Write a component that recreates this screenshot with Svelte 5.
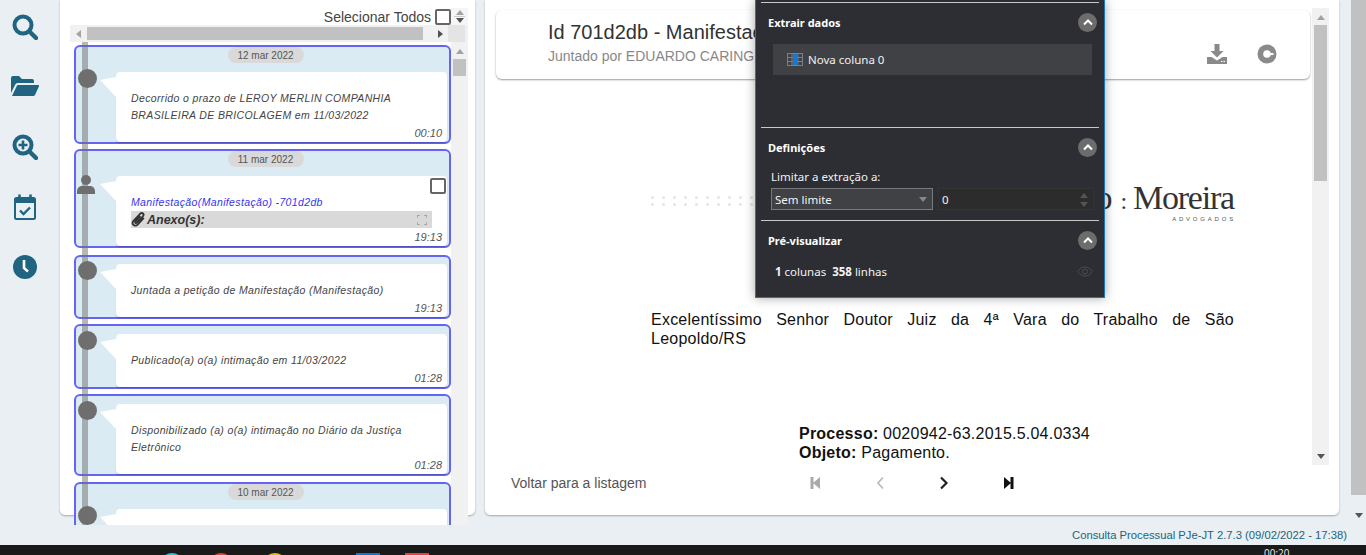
<script>
  const items = [
    { date: "12 mar 2022", text: "Decorrido o prazo de LEROY MERLIN COMPANHIA BRASILEIRA DE BRICOLAGEM em 11/03/2022", time: "00:10", gap: 0 },
    { date: "11 mar 2022", link: "Manifestação(Manifestação) -701d2db", attach: true, time: "19:13", gap: 5 },
    { text: "Juntada a petição de Manifestação (Manifestação)", time: "19:13", gap: 7 },
    { text: "Publicado(a) o(a) intimação em 11/03/2022", time: "01:28", gap: 5 },
    { text: "Disponibilizado (a) o(a) intimação no Diário da Justiça Eletrônico", time: "01:28", gap: 5 },
    { date: "10 mar 2022", text: "Juntada a petição de Razões Finais", time: "18:02", gap: 6 }
  ];
</script>

<div class="page">
  <div class="main">
    <nav class="nav">
      <svg viewBox="0 0 26 26" width="26" height="26"><circle cx="11" cy="11" r="8.5" fill="none" stroke="#1f6480" stroke-width="4" /><path d="M17.5 17.5 24 24" stroke="#1f6480" stroke-width="4.4" stroke-linecap="round" /></svg>
      <svg class="folder" viewBox="0 0 28 20" width="28" height="20"><path d="M0 17V2a2 2 0 0 1 2-2h6l3 3h10a2 2 0 0 1 2 2v2H7a3 3 0 0 0-3 2z" fill="#1f6480" /><path d="M1 20 6 9.500a1 1 0 0 1 1-.5h20a1 1 0 0 1 1 1.300L24 19a2 2 0 0 1-2 1z" fill="#1f6480" /></svg>
      <svg viewBox="0 0 26 26" width="26" height="26"><circle cx="11" cy="11" r="8.500" fill="none" stroke="#1f6480" stroke-width="4" /><path d="M17.500 17.500 24 24" stroke="#1f6480" stroke-width="4.400" stroke-linecap="round" /><path d="M11 6.500v9M6.500 11h9" stroke="#1f6480" stroke-width="2.600" /></svg>
      <svg viewBox="0 0 22 26" width="22" height="26"><rect x="1" y="4" width="20" height="21" rx="1.500" fill="none" stroke="#1f6480" stroke-width="2" /><rect x="1" y="4" width="20" height="5" fill="#1f6480" /><path d="M5.500 0.500v4M16.500 0.500v4" stroke="#1f6480" stroke-width="2.600" /><path d="m6 16.500 3.500 3.500 6.500-6.500" fill="none" stroke="#1f6480" stroke-width="2.400" /></svg>
      <svg viewBox="0 0 24 24" width="24" height="24"><circle cx="12" cy="12" r="12" fill="#1f6480" /><path d="M11 5v8l4 3.500" fill="none" stroke="#fff" stroke-width="2.600" /></svg>
    </nav>

    <section class="left-card">
      <div class="pane">
        <div class="select-all">
          <span>Selecionar Todos</span>
          <span class="check"></span>
          <span class="mini-spin"><i class="up"></i><i class="sep"></i><i class="down"></i></span>
        </div>
        <div class="hbar">
          <i class="arrow-left"></i>
          <div class="hthumb"></div>
          <i class="arrow-right"></i>
          <div class="corner"></div>
        </div>
        <div class="pane-body">
          <div class="list">
            {#each items as item}
              <article class="item" style="margin-top: {item.gap}px">
                {#if item.date}
                  <div class="pill">{item.date}</div>
                {/if}
                <div class="bubble" class:first={!item.date}>
                  {#if item.attach}
                    <svg class="person" viewBox="0 0 18 19" width="18" height="19"><circle cx="9" cy="5" r="5" fill="#6e6e6e" /><path d="M0 19v-3a5 5 0 0 1 5-5h8a5 5 0 0 1 5 5v3z" fill="#6e6e6e" /></svg>
                    <span class="check small"></span>
                  {:else}
                    <span class="dot"></span>
                  {/if}
                  {#if item.link}
                    <p class="link">{item.link}</p>
                    <div class="attach">
                      <svg viewBox="0 0 14 16" width="15" height="17"><path d="M12 6.500 6.200 12.800c-1.200 1.200-3 1.300-4 .3s-.9-2.700.3-4L8.500 2.600c.8-.8 2-.9 2.800-.2s.6 1.900-.2 2.700L5.500 11c-.4.400-1 .5-1.400.1s-.3-1 .1-1.400l4.600-4.900" fill="none" stroke="#333" stroke-width="1.700" /></svg>
                      <b>Anexo(s):</b>
                      <svg class="expand" viewBox="0 0 10 10" width="10" height="10"><path d="M0 3V0h3M7 0h3v3M10 7v3H7M3 10H0V7" fill="none" stroke="#999" stroke-width="1.300" /></svg>
                    </div>
                  {:else}
                    <p>{item.text}</p>
                  {/if}
                  <div class="time">{item.time}</div>
                </div>
              </article>
            {/each}
          </div>
          <div class="vbar">
            <i class="up"></i>
            <div class="vthumb"></div>
          </div>
        </div>
      </div>
    </section>

    <section class="right-card">
      <div class="viewer">
        <div class="scroller">
          <header class="doc-head">
            <div>
              <h1>Id 701d2db - Manifestação</h1>
              <p>Juntado por EDUARDO CARINGI RAUPP</p>
            </div>
            <div class="head-icons">
              <svg viewBox="0 0 20 20" width="20" height="20"><path d="M7.500 0h5v7h4l-6.500 6.500L3.500 7h4z" fill="#8a8a8a" /><path d="M0 13h4.500l5.500 3.500 5.500-3.500H20v7H0z" fill="#8a8a8a" /><path d="M14 17.500h4" stroke="#fff" stroke-width="1.200" stroke-dasharray="1.500 1" /></svg>
              <svg viewBox="0 0 20 20" width="20" height="20"><circle cx="10" cy="10" r="9.500" fill="#8a8a8a" /><circle cx="10" cy="10" r="3.800" fill="#fff" /><rect x="10" y="9" width="6.500" height="2" fill="#fff" /></svg>
            </div>
          </header>
          <div class="doc">
            <div class="logo">
              <div class="dots">
                {#each Array(20) as _}
                  <i></i>
                {/each}
              </div>
              <div class="brand">
                <div class="brand-name"><span class="tail">o</span><span class="colon">:</span>Moreira</div>
                <div class="brand-sub">ADVOGADOS</div>
              </div>
            </div>
            <p class="addressee">Excelentíssimo Senhor Doutor Juiz da 4ª Vara do Trabalho de São Leopoldo/RS</p>
            <p class="meta"><b>Processo:</b> 0020942-63.2015.5.04.0334<br /><b>Objeto:</b> Pagamento.</p>
          </div>
        </div>
        <div class="vbar doc-bar">
          <i class="up"></i>
          <div class="doc-thumb"></div>
          <i class="down"></i>
        </div>
      </div>
      <footer class="pager">
        <span class="back">Voltar para a listagem</span>
        <div class="pager-btns">
          <svg viewBox="0 0 12 14" width="12" height="14"><path d="M1.500 1h3v12h-3zM11 1v12L4 7z" fill="#aaa" /></svg>
          <svg viewBox="0 0 10 14" width="10" height="14"><path d="M8 1.500 3 7l5 5.500" fill="none" stroke="#bbb" stroke-width="1.800" /></svg>
          <svg viewBox="0 0 10 14" width="10" height="14"><path d="M2 1.500 7.500 7 2 12.500" fill="none" stroke="#222" stroke-width="2.200" /></svg>
          <svg viewBox="0 0 12 14" width="12" height="14"><path d="M10.500 1h-3v12h3zM1 1v12l7-6z" fill="#111" /></svg>
        </div>
      </footer>
    </section>

    <div class="page-bar">
      <div class="page-thumb"></div>
      <i class="down"></i>
    </div>
  </div>

  <div class="credit">Consulta Processual PJe-JT 2.7.3 (09/02/2022 - 17:38)</div>

  <div class="taskbar">
    <i class="app round teal"></i>
    <i class="app round red"></i>
    <i class="app round yellow"></i>
    <i class="app blue"></i>
    <i class="app orange"></i>
    <span class="clock">00:20</span>
  </div>

  <aside class="panel">
    <div class="rule top"></div>
    <div class="panel-head">
      <strong>Extrair dados</strong>
      <span class="chev"><svg viewBox="0 0 10 7" width="10" height="7"><path d="m1 5.500 4-4 4 4" fill="none" stroke="#fff" stroke-width="2" /></svg></span>
    </div>
    <div class="column-row">
      <svg viewBox="0 0 16 13" width="16" height="13"><rect x="0.500" y="0.500" width="15" height="12" fill="none" stroke="#7a7f88" /><path d="M5 0v13M11 0v13M0 4.500h16M0 8.500h16" stroke="#7a7f88" /><rect x="6" y="1" width="4" height="11" fill="#1479d4" /></svg>
      <span>Nova coluna 0</span>
    </div>
    <div class="rule settings"></div>
    <div class="panel-head">
      <strong>Definições</strong>
      <span class="chev"><svg viewBox="0 0 10 7" width="10" height="7"><path d="m1 5.500 4-4 4 4" fill="none" stroke="#fff" stroke-width="2" /></svg></span>
    </div>
    <div class="limit-label">Limitar a extração a:</div>
    <div class="limit-row">
      <div class="fake-select">Sem limite<i class="caret"></i></div>
      <div class="fake-number">0<span class="spin"><i class="up"></i><i class="down"></i></span></div>
    </div>
    <div class="rule preview"></div>
    <div class="panel-head">
      <strong>Pré-visualizar</strong>
      <span class="chev"><svg viewBox="0 0 10 7" width="10" height="7"><path d="m1 5.500 4-4 4 4" fill="none" stroke="#fff" stroke-width="2" /></svg></span>
    </div>
    <div class="counts">
      <span><b>1</b> colunas &nbsp;<b>358</b> linhas</span>
      <svg viewBox="0 0 16 11" width="16" height="11"><path d="M.7 5.500C2.500 2.500 5 1 8 1s5.500 1.500 7.300 4.500C13.500 8.500 11 10 8 10S2.500 8.500.7 5.500z" fill="none" stroke="#4a4c50" /><circle cx="8" cy="5.500" r="2.500" fill="none" stroke="#4a4c50" /></svg>
    </div>
  </aside>
</div>

<style>
  :global(body) {
    margin: 0;
    background: #e9eff2;
    font-family: "Liberation Sans", Arial, sans-serif;
    overflow: hidden;
  }

  .page {
    position: relative;
    height: 555px;
    display: flex;
    flex-direction: column;
    overflow: hidden;
  }

  .main {
    display: flex;
    height: 525px;
    flex: none;
  }

  .nav {
    width: 50px;
    margin-right: 10px;
    padding-top: 14px;
    display: flex;
    flex-direction: column;
    align-items: center;
    flex: none;
  }
  .nav svg {
    height: 26px;
    margin-bottom: 34px;
  }
  .nav .folder {
    margin-top: -1px;
    margin-bottom: 35px;
  }

  .left-card {
    width: 415px;
    height: 515px;
    flex: none;
    background: #fff;
    border-radius: 0 0 5px 5px;
    box-shadow: 0 1px 2px rgba(0, 0, 0, 0.3);
    margin-right: 10px;
  }
  .pane {
    margin: 8px 0 0 10px;
    width: 398px;
    height: 517px;
    display: flex;
    flex-direction: column;
  }
  .select-all {
    height: 17px;
    display: flex;
    align-items: center;
    justify-content: flex-end;
    font-size: 14px;
    color: #444;
    flex: none;
  }
  .check {
    display: block;
    width: 12px;
    height: 12px;
    border: 2px solid #666;
    border-radius: 2px;
    margin-left: 4px;
  }
  .mini-spin {
    width: 17px;
    display: flex;
    flex-direction: column;
    align-items: center;
    gap: 1px;
    background: #f5f5f5;
    height: 17px;
    justify-content: center;
  }
  .sep {
    display: block;
    width: 11px;
    height: 1px;
    background: #ccc;
  }

  .up, .down, .arrow-left, .arrow-right, .caret {
    display: block;
    width: 0;
    height: 0;
    border-style: solid;
    border-color: transparent;
    flex: none;
  }
  .up {
    border-width: 0 4.500px 5px;
    border-bottom-color: #a3a3a3;
  }
  .down {
    border-width: 5px 4.500px 0;
    border-top-color: #555;
  }
  .arrow-left {
    border-width: 4.500px 5px 4.500px 0;
    border-right-color: #a3a3a3;
  }
  .arrow-right {
    border-width: 4.500px 0 4.500px 5px;
    border-left-color: #505050;
  }

  .hbar {
    height: 17px;
    flex: none;
    display: flex;
    align-items: center;
    background: #f1f1f1;
    padding-left: 6px;
  }
  .hthumb {
    width: 336px;
    height: 13px;
    background: #c1c1c1;
    margin: 0 15px 0 6px;
  }
  .corner {
    width: 17px;
    height: 17px;
    background: #e4e4e4;
    margin-left: 5px;
  }

  .pane-body {
    flex: 1;
    min-height: 0;
    display: flex;
  }
  .list {
    position: relative;
    flex: 1;
    padding: 3px 0 0 4px;
    overflow: hidden;
    display: flex;
    flex-direction: column;
  }
  .list::before {
    content: "";
    position: absolute;
    left: 12px;
    top: 0;
    bottom: 0;
    width: 6px;
    background: rgba(112, 112, 112, 0.5);
    z-index: 1;
  }
  .vbar {
    width: 17px;
    flex: none;
    background: #f1f1f1;
    display: flex;
    flex-direction: column;
    align-items: center;
    padding-top: 7px;
  }
  .vthumb {
    width: 13px;
    height: 17px;
    margin-top: 5px;
    background: #c1c1c1;
  }

  .item {
    flex: none;
    background: #dbebf3;
    border: 2px solid #6464f5;
    border-radius: 6px;
    padding: 0 2px 0 40px;
  }
  .pill {
    width: 76px;
    height: 16px;
    margin: 0 auto 9px;
    position: relative;
    left: -16px;
    background: #d9d9d9;
    border-radius: 8px;
    font-size: 10px;
    line-height: 17px;
    text-align: center;
    color: #555;
  }
  .bubble {
    position: relative;
    background: #fff;
    border-radius: 4px;
    padding: 18px 5px 2px 15px;
    box-shadow: 0 1px 1px rgba(0, 0, 0, 0.2);
    font-style: italic;
    color: #444;
  }
  .bubble.first {
    margin-top: 8px;
  }
  .item:nth-child(3) .bubble.first {
    margin-top: 7px;
  }
  .bubble::before {
    content: "";
    position: absolute;
    left: -16px;
    top: 5px;
    width: 16px;
    height: 20px;
    background: #fff;
    clip-path: polygon(0 15%, 100% 0, 100% 100%);
  }
  .bubble p {
    margin: 0;
    font-size: 10.500px;
    line-height: 17px;
    letter-spacing: 0.360px;
    padding-right: 30px;
  }
  .bubble .link {
    color: #3434f5;
  }
  .dot {
    position: absolute;
    left: -38px;
    top: -3px;
    width: 19px;
    height: 19px;
    border-radius: 50%;
    background: #6e6e6e;
    z-index: 2;
  }
  .person {
    position: absolute;
    left: -39px;
    top: -1px;
    z-index: 2;
  }
  .check.small {
    position: absolute;
    right: 1px;
    top: 2px;
  }
  .attach {
    height: 17px;
    width: 301px;
    display: flex;
    align-items: center;
    gap: 1px;
    background: #d9d9d9;
    font-size: 12.500px;
    color: #333;
  }
  .expand {
    margin-left: auto;
    margin-right: 5px;
  }
  .time {
    margin-top: 2px;
    height: 14px;
    line-height: 14px;
    font-size: 11px;
    text-align: right;
    color: #555;
  }

  .right-card {
    width: 854px;
    height: 515px;
    flex: none;
    background: #fff;
    border-radius: 0 0 5px 5px;
    box-shadow: 0 1px 2px rgba(0, 0, 0, 0.3);
    margin-right: 12px;
    display: flex;
    flex-direction: column;
  }
  .viewer {
    height: 457px;
    margin: 8px 10px 0 0;
    display: flex;
    flex: none;
  }
  .scroller {
    flex: 1;
    min-width: 0;
    overflow: hidden;
    padding: 2px 2px 0 11px;
  }
  .doc-head {
    height: 69px;
    box-sizing: border-box;
    padding: 10px 33px 0 52px;
    display: flex;
    justify-content: space-between;
    border-radius: 6px;
    box-shadow: 0 1px 2px rgba(0, 0, 0, 0.4);
  }
  .doc-head h1 {
    margin: 0;
    font-size: 20px;
    font-weight: 400;
    line-height: 24px;
    color: #333;
    white-space: nowrap;
  }
  .doc-head p {
    margin: 4px 0 0;
    font-size: 14px;
    line-height: 16px;
    color: #888;
    white-space: nowrap;
  }
  .head-icons {
    display: flex;
    gap: 30px;
    padding-top: 24px;
  }

  .doc {
    width: 583px;
    margin-left: 155px;
  }
  .logo {
    display: flex;
    justify-content: space-between;
    margin-top: 102px;
    height: 45px;
  }
  .dots {
    width: 102px;
    height: 10px;
    margin-top: 15px;
    display: grid;
    grid-template-columns: repeat(10, 3px);
    justify-content: space-between;
    row-gap: 4px;
  }
  .dots i {
    display: block;
    width: 3px;
    height: 3px;
    border-radius: 50%;
    background: #e4e4e4;
  }
  .brand {
    text-align: right;
  }
  .brand-name {
    font-family: "Liberation Serif", serif;
    font-size: 34px;
    line-height: 34px;
    letter-spacing: -1.200px;
    color: #333;
  }
  .colon {
    font-size: 24px;
    margin: 0 7px 0 9px;
  }
  .brand-sub {
    font-size: 6px;
    letter-spacing: 2.800px;
    line-height: 7px;
    margin-top: -2px;
    margin-right: -2px;
    color: #555;
  }
  .addressee {
    margin: 0;
    padding-top: 84px;
    font-size: 16px;
    line-height: 19px;
    letter-spacing: 0.230px;
    text-align: justify;
    color: #111;
  }
  .meta {
    margin: 76px 0 0 148px;
    font-size: 16px;
    line-height: 19px;
    letter-spacing: 0.230px;
    color: #111;
    white-space: nowrap;
  }
  .doc-bar {
    position: relative;
  }
  .doc-thumb {
    width: 13px;
    height: 156px;
    margin-top: 5px;
    background: #c1c1c1;
  }
  .doc-bar .down {
    margin-top: auto;
    margin-bottom: 6px;
  }

  .pager {
    flex: 1;
    display: flex;
    align-items: center;
    padding-left: 26px;
    padding-bottom: 15px;
    box-sizing: border-box;
  }
  .back {
    width: 272px;
    font-size: 14px;
    color: #555;
    flex: none;
  }
  .pager-btns {
    display: grid;
    grid-template-columns: repeat(4, 64.500px);
    justify-items: center;
  }

  .page-bar {
    width: 15px;
    flex: none;
    display: flex;
    flex-direction: column;
    align-items: center;
  }
  .page-thumb {
    width: 15px;
    height: 495px;
    background: #c1c1c1;
  }
  .page-bar .down {
    margin-top: 18px;
    border-top-color: #555;
  }

  .credit {
    height: 20px;
    flex: none;
    box-sizing: border-box;
    padding-right: 19px;
    text-align: right;
    font-size: 11.250px;
    line-height: 20px;
    color: #1d6480;
  }

  .taskbar {
    height: 10px;
    flex: none;
    background: #1a1a1a;
    display: flex;
    overflow: hidden;
    padding-left: 160px;
  }
  .app {
    display: block;
    width: 24px;
    height: 24px;
    flex: none;
    margin-top: 8px;
    margin-right: 25px;
  }
  .round {
    border-radius: 50%;
  }
  .teal { background: #2cc4c9; }
  .red { background: #d9453c; }
  .yellow { background: #e6b81c; margin-left: 5px; margin-right: 69px; }
  .blue { background: #0a78d4; }
  .orange { background: #e8433a; }
  .clock {
    margin-left: 810px;
    font-family: "Open Sans", sans-serif;
    font-size: 10px;
    line-height: 10px;
    margin-top: 3px;
    color: #eee;
  }

  .panel {
    position: absolute;
    left: 755px;
    top: 0;
    width: 350px;
    height: 298px;
    box-sizing: border-box;
    padding: 2px 5px 0;
    background: #2d2e33;
    border: solid #1a78c2;
    border-width: 0 1px 1px;
    box-shadow: 0 0 10px rgba(0, 0, 0, 0.35);
    color: #f2f2f2;
    font-family: "Noto Sans", sans-serif;
    font-size: 11.500px;
  }
  .rule {
    height: 1px;
    background: #c8c8c8;
  }
  .panel-head {
    height: 19px;
    margin: 10px 2px 0 7px;
    display: flex;
    align-items: center;
    justify-content: space-between;
  }
  .panel-head strong {
    font-weight: 700;
    font-size: 11px;
    color: #fff;
  }
  .chev {
    width: 19px;
    height: 19px;
    border-radius: 50%;
    background: #6c6c6c;
    display: flex;
    align-items: center;
    justify-content: center;
  }
  .column-row {
    margin: 12px 7px 0 12px;
    height: 31px;
    background: #404145;
    display: flex;
    align-items: center;
    gap: 5px;
    padding-left: 14px;
  }
  .rule.settings {
    margin-top: 52px;
  }
  .limit-label {
    margin: 11px 0 0 10px;
    height: 17px;
    line-height: 17px;
  }
  .limit-row {
    display: flex;
    gap: 5px;
    margin: 3px 0 0 10px;
    height: 22px;
  }
  .fake-select, .fake-number {
    box-sizing: border-box;
    height: 22px;
    padding-top: 1px;
    position: relative;
    display: flex;
    align-items: center;
    justify-content: space-between;
  }
  .fake-select {
    width: 162px;
    border: 1px solid #77797d;
    background: #404145;
    padding: 1px 5px 0 3px;
  }
  .caret {
    border-width: 5px 4.500px 0;
    border-top-color: #888;
  }
  .fake-number {
    width: 156px;
    border: 1px solid #333;
    background: #2c2c2c;
    padding: 1px 5px 0 3px;
  }
  .spin {
    display: flex;
    flex-direction: column;
    gap: 4px;
  }
  .spin .up {
    border-bottom-color: #555;
  }
  .spin .down {
    border-top-color: #555;
  }
  .rule.preview {
    margin-top: 10px;
  }
  .counts {
    margin: 12px 6px 0 14px;
    height: 18px;
    display: flex;
    align-items: center;
    justify-content: space-between;
  }
  .counts b {
    font-weight: 700;
  }
</style>
